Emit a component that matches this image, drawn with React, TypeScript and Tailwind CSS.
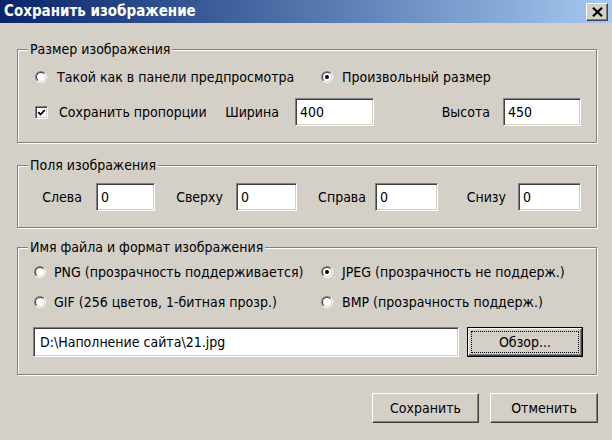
import React from 'react';

const sunken =
  'border border-t-[#808080] border-l-[#808080] border-r-white border-b-white shadow-[inset_1px_1px_0_#404040,inset_-1px_-1px_0_#d4d0c8]';
const raised =
  'border border-t-white border-l-white border-r-[#404040] border-b-[#404040] shadow-[inset_-1px_-1px_0_#808080]';

function Radio({ checked }: { checked?: boolean }) {
  return (
    <span className="w-[12px] h-[12px] shrink-0 rounded-full border border-t-[#808080] border-l-[#808080] border-r-white border-b-white flex items-center justify-center">
      <span className="w-[10px] h-[10px] rounded-full bg-white border border-t-[#404040] border-l-[#404040] border-r-[#d4d0c8] border-b-[#d4d0c8] flex items-center justify-center">
        {checked && <span className="w-[4px] h-[4px] rounded-full bg-black" />}
      </span>
    </span>
  );
}

function Checkbox() {
  return (
    <span className={`w-[13px] h-[13px] shrink-0 bg-white flex items-center justify-center ${sunken}`}>
      <svg width="9" height="9" viewBox="0 0 9 9">
        <path d="M1.2 4.2 L3.5 6.5 L7.8 2" fill="none" stroke="#000" strokeWidth="1.8" />
      </svg>
    </span>
  );
}

function Field({ value, w }: { value: string; w: string }) {
  return (
    <div className={`${w} h-[28px] bg-white flex items-center pl-[4px] ${sunken}`}>{value}</div>
  );
}

function Group({ title, h, children }: { title: string; h: string; children: React.ReactNode }) {
  return (
    <div className={`${h} border border-[#808080] shadow-[inset_1px_1px_0_#fff,1px_1px_0_#fff] flex flex-col`}>
      <div className="-mt-[9px] ml-[10px] px-[2px] w-fit h-[16px] leading-[16px] bg-[#d4d0c8]">{title}</div>
      {children}
    </div>
  );
}

function Labeled({ label, w, pr }: { label: string; w: string; pr: string }) {
  return <div className={`${w} ${pr} text-right`}>{label}</div>;
}

export default function App() {
  return (
    <div className="w-[612px] h-[440px] bg-[#d4d0c8] text-black text-[14px] whitespace-nowrap font-['DejaVu_Sans_Condensed','DejaVu_Sans',sans-serif] flex flex-col overflow-hidden">
      <div className="h-[23px] shrink-0 bg-gradient-to-r from-[#0a246a] to-[#a6caf0] flex items-center pl-[4px]">
        <span className="text-white font-bold text-[15px]">Сохранить изображение</span>
        <div className={`ml-auto mr-[4px] w-[22px] h-[18px] bg-[#d4d0c8] flex items-center justify-center ${raised}`}>
          <svg width="11" height="10" viewBox="0 0 11 10">
            <path d="M1 0.8 L10 9.2 M10 0.8 L1 9.2" stroke="#000" strokeWidth="2.2" />
          </svg>
        </div>
      </div>

      <div className="pl-[17px] pr-[15px] pt-[26px] flex flex-col">
        <Group title="Размер изображения" h="h-[94px]">
          <div className="mt-[10px] h-[20px] pl-[17px] flex items-center">
            <div className="w-[286px] flex items-center gap-[10px]">
              <Radio />
              <span>Такой как в панели предпросмотра</span>
            </div>
            <div className="flex items-center gap-[9px]">
              <Radio checked />
              <span>Произвольный размер</span>
            </div>
          </div>
          <div className="mt-[11px] pl-[17px] flex items-center">
            <div className="w-[169px] flex items-center gap-[11px]">
              <Checkbox />
              <span>Сохранить пропорции</span>
            </div>
            <Labeled label="Ширина" w="w-[91px]" pr="pr-[16px]" />
            <Field value="400" w="w-[79px]" />
            <Labeled label="Высота" w="w-[129px]" pr="pr-[13px]" />
            <Field value="450" w="w-[78px]" />
          </div>
        </Group>

        <div className="mt-[22px]">
          <Group title="Поля изображения" h="h-[63px]">
            <div className="mt-[10px] flex items-center">
              <Labeled label="Слева" w="w-[78px]" pr="pr-[14px]" />
              <Field value="0" w="w-[59px]" />
              <Labeled label="Сверху" w="w-[81px]" pr="pr-[13px]" />
              <Field value="0" w="w-[61px]" />
              <Labeled label="Справа" w="w-[78px]" pr="pr-[9px]" />
              <Field value="0" w="w-[63px]" />
              <Labeled label="Снизу" w="w-[80px]" pr="pr-[12px]" />
              <Field value="0" w="w-[63px]" />
            </div>
          </Group>
        </div>

        <div className="mt-[19px]">
          <Group title="Имя файла и формат изображения" h="h-[128px]">
            <div className="mt-[7px] h-[20px] pl-[16px] flex items-center">
              <div className="w-[287px] flex items-center gap-[8px]">
                <Radio />
                <span>PNG (прозрачность поддерживается)</span>
              </div>
              <div className="flex items-center gap-[9px]">
                <Radio checked />
                <span>JPEG (прозрачность не поддерж.)</span>
              </div>
            </div>
            <div className="mt-[10px] h-[20px] pl-[16px] flex items-center">
              <div className="w-[287px] flex items-center gap-[8px]">
                <Radio />
                <span>GIF (256 цветов, 1-битная прозр.)</span>
              </div>
              <div className="flex items-center gap-[9px]">
                <Radio />
                <span>BMP (прозрачность поддерж.)</span>
              </div>
            </div>
            <div className="mt-[15px] pl-[15px] flex items-center">
              <div className={`w-[426px] h-[30px] bg-white flex items-center pl-[6px] ${sunken}`}>
                D:\Наполнение сайта\21.jpg
              </div>
              <div className="ml-[8px] w-[116px] h-[30px] border border-black flex">
                <div className={`flex-1 flex p-[2px] ${raised}`}>
                  <div className="flex-1 border border-dotted border-black flex items-center justify-center">
                    Обзор...
                  </div>
                </div>
              </div>
            </div>
          </Group>
        </div>
      </div>

      <div className="mt-[18px] pr-[14px] flex justify-end gap-[11px]">
        <div className={`w-[107px] h-[30px] flex items-center justify-center ${raised}`}>Сохранить</div>
        <div className={`w-[108px] h-[30px] flex items-center justify-center ${raised}`}>Отменить</div>
      </div>
    </div>
  );
}
